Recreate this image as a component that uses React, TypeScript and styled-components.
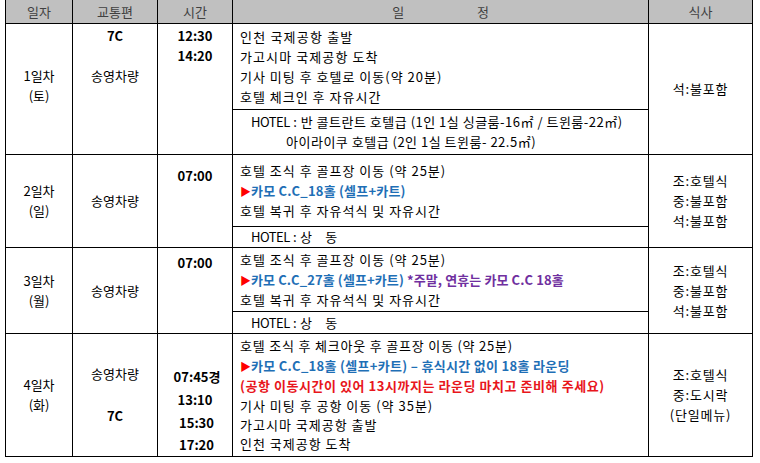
import React from 'react'
import styled, { createGlobalStyle } from 'styled-components'

const GlobalStyle = createGlobalStyle`
  body {
    margin: 0;
    background: #fff;
    font-family: "Noto Sans CJK KR", "Noto Sans", sans-serif;
    font-size: 13px;
    color: #000;
  }
`

const Page = styled.div`
  padding: 0 0 0 5px;
  margin-top: -1px;
`

const Table = styled.table`
  border-collapse: collapse;
  table-layout: fixed;
  width: 748px;

  td, th {
    border: 1px solid #000;
    padding: 0;
  }
`

const HeadCell = styled.th`
  height: 23px;
  background: #c0c0c0;
  color: #404040;
  font-weight: 400;
  text-align: center;
  white-space: pre;
`

const Cell = styled.td<{ $top?: number; $middle?: boolean; $ls?: number }>`
  vertical-align: ${p => (p.$middle ? 'middle' : 'top')};
  text-align: center;
  padding-top: ${p => p.$top ?? 0}px !important;
  line-height: 20px;
  letter-spacing: ${p => p.$ls ?? 0}px;
`

const Plan = styled.td<{ $lh?: number; $indent?: number }>`
  vertical-align: middle;
  text-align: left;
  padding: 0 0 0 ${p => p.$indent ?? 7}px !important;
  line-height: ${p => p.$lh ?? 20}px;
  white-space: pre;
`

type Tone = 'blue' | 'purple' | 'red'

const toneColor = (t?: Tone) =>
  t === 'blue' ? '#1f6fb6' : t === 'purple' ? '#7030a0' : t === 'red' ? '#e8161c' : '#000'

const Line = styled.div<{ $tone?: Tone; $bold?: boolean; $shift?: number; $ls?: number }>`
  color: ${p => toneColor(p.$tone)};
  font-weight: ${p => (p.$bold ? 700 : 400)};
  padding-left: ${p => p.$shift ?? 0}px;
  letter-spacing: ${p => p.$ls ?? (p.$bold ? 0.4 : 1)}px;
`

const Accent = styled.span<{ $tone: Tone }>`
  color: ${p => toneColor(p.$tone)};
`

const Arrow = styled.span`
  color: #ff0000;
  font-size: 11px;
  letter-spacing: 0;
`

const Time = styled.div<{ $shift?: number; $lh?: number }>`
  font-weight: 700;
  padding-left: ${p => p.$shift ?? 0}px;
  line-height: ${p => p.$lh ?? 20}px;
`

const Bold = styled.div`
  font-weight: 700;
`

const Gap = styled.div<{ $h: number }>`
  height: ${p => p.$h}px;
`

const Hotel = styled.span`
  letter-spacing: -0.5px;
`

const HotelLabel = () => (
  <>
    <Hotel>HOTEL</Hotel>
    {' : '}
  </>
)

export default function App() {
  return (
    <Page>
      <GlobalStyle />
      <Table>
        <colgroup>
          <col style={{ width: 67 }} />
          <col style={{ width: 85 }} />
          <col style={{ width: 75 }} />
          <col style={{ width: 416 }} />
          <col style={{ width: 104 }} />
        </colgroup>
        <thead>
          <tr>
            <HeadCell>일자</HeadCell>
            <HeadCell>교통편</HeadCell>
            <HeadCell>시간</HeadCell>
            <HeadCell>{'일                         정'}</HeadCell>
            <HeadCell>식사</HeadCell>
          </tr>
        </thead>
        <tbody>
          {/* 1일차 */}
          <tr style={{ height: 86 }}>
            <Cell rowSpan={2} $middle>
              <div>1일차</div>
              <div>(토)</div>
              <Gap $h={6} />
            </Cell>
            <Cell rowSpan={2} $top={2}>
              <Bold>7C</Bold>
              <Gap $h={20} />
              <div>송영차량</div>
            </Cell>
            <Cell rowSpan={2} $top={2}>
              <Time>12:30</Time>
              <Time>14:20</Time>
            </Cell>
            <Plan>
              <Line $ls={1.2}>인천 국제공항 출발</Line>
              <Line $ls={1.1}>가고시마 국제공항 도착</Line>
              <Line>기사 미팅 후 호텔로 이동(약 20분)</Line>
              <Line>호텔 체크인 후 자유시간</Line>
            </Plan>
            <Cell rowSpan={2} $middle $ls={0.8}>
              석:불포함
            </Cell>
          </tr>
          <tr style={{ height: 45 }}>
            <Plan $indent={18}>
              <Line $ls={0.5}>
                <HotelLabel />반 콜트란트 호텔급 (1인 1실 싱글룸-16㎡ / 트윈룸-22㎡)
              </Line>
              <Line $shift={35} $ls={0.5}>아이라이쿠 호텔급 (2인 1실 트윈룸- 22.5㎡)</Line>
            </Plan>
          </tr>

          {/* 2일차 */}
          <tr style={{ height: 72 }}>
            <Cell rowSpan={2} $middle>
              <div>2일차</div>
              <div>(일)</div>
            </Cell>
            <Cell rowSpan={2} $middle>
              송영차량
            </Cell>
            <Cell rowSpan={2} $top={11}>
              <Time>07:00</Time>
            </Cell>
            <Plan>
              <Line>호텔 조식 후 골프장 이동 (약 25분)</Line>
              <Line $tone="blue" $bold $ls={0.2}>
                <Arrow>▶</Arrow>카모 C.C_18홀 (셀프+카트)
              </Line>
              <Line>호텔 복귀 후 자유석식 및 자유시간</Line>
            </Plan>
            <Cell rowSpan={2} $middle $ls={0.8}>
              <div>조:호텔식</div>
              <div>중:불포함</div>
              <div>석:불포함</div>
            </Cell>
          </tr>
          <tr style={{ height: 21 }}>
            <Plan $indent={18}>
              <Line $ls={0.3}>
                <HotelLabel />{'상    동'}
              </Line>
            </Plan>
          </tr>

          {/* 3일차 */}
          <tr style={{ height: 64 }}>
            <Cell rowSpan={2} $middle>
              <div>3일차</div>
              <div>(월)</div>
            </Cell>
            <Cell rowSpan={2} $middle>
              송영차량
            </Cell>
            <Cell rowSpan={2} $top={5}>
              <Time>07:00</Time>
            </Cell>
            <Plan>
              <Line>호텔 조식 후 골프장 이동 (약 25분)</Line>
              <Line $tone="blue" $bold $ls={0.1}>
                <Arrow>▶</Arrow>카모 C.C_27홀 (셀프+카트) <Accent $tone="purple">*주말, 연휴는 카모 C.C 18홀</Accent>
              </Line>
              <Line>호텔 복귀 후 자유석식 및 자유시간</Line>
            </Plan>
            <Cell rowSpan={2} $middle $ls={0.8}>
              <div>조:호텔식</div>
              <div>중:불포함</div>
              <div>석:불포함</div>
            </Cell>
          </tr>
          <tr style={{ height: 22 }}>
            <Plan $indent={18}>
              <Line $ls={0.3}>
                <HotelLabel />{'상    동'}
              </Line>
            </Plan>
          </tr>

          {/* 4일차 */}
          <tr style={{ height: 123 }}>
            <Cell $middle>
              <div>4일차</div>
              <div>(화)</div>
            </Cell>
            <Cell $middle>
              <div>송영차량</div>
              <Gap $h={22} />
              <Bold>7C</Bold>
            </Cell>
            <Cell $top={31}>
              <Time $shift={4} $lh={23}>07:45경</Time>
              <Time $shift={-3} $lh={23}>13:10</Time>
              <Time $shift={3} $lh={23}>15:30</Time>
              <Time $shift={3} $lh={21}>17:20</Time>
            </Cell>
            <Plan $lh={19.4}>
              <Line $ls={0.8}>호텔 조식 후 체크아웃 후 골프장 이동 (약 25분)</Line>
              <Line $tone="blue" $bold $ls={0.3}>
                <Arrow>▶</Arrow>카모 C.C_18홀 (셀프+카트) – 휴식시간 없이 18홀 라운딩
              </Line>
              <Line $tone="red" $bold $ls={0.55}>
                (공항 이동시간이 있어 13시까지는 라운딩 마치고 준비해 주세요)
              </Line>
              <Line>기사 미팅 후 공항 이동 (약 35분)</Line>
              <Line>가고시마 국제공항 출발</Line>
              <Line>인천 국제공항 도착</Line>
            </Plan>
            <Cell $middle $ls={0.8}>
              <div>조:호텔식</div>
              <div>중:도시락</div>
              <div>(단일메뉴)</div>
            </Cell>
          </tr>
        </tbody>
      </Table>
    </Page>
  )
}
